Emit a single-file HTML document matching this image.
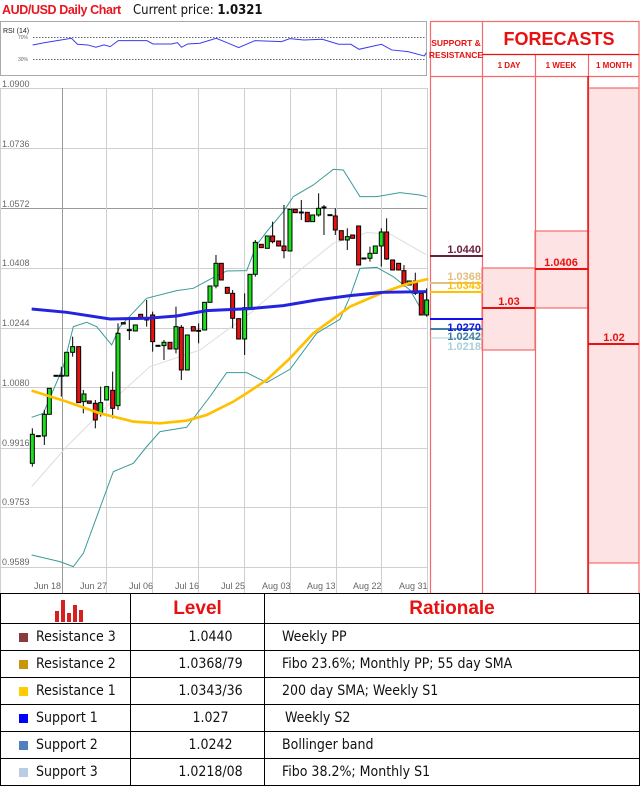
<!DOCTYPE html>
<html><head><meta charset="utf-8"><style>
body{margin:0;width:640px;height:791px;background:#fff;overflow:hidden;position:relative;font-family:"Liberation Sans",sans-serif}
.a{position:absolute}
.t{font-family:"DejaVu Sans Condensed","Liberation Sans",sans-serif}
table{border-collapse:collapse;position:absolute;left:0;top:593px;width:640px;table-layout:fixed}
td{border:1.5px solid #000;height:26px;padding:0;font-size:14px;color:#111;font-family:"DejaVu Sans Condensed","Liberation Sans",sans-serif;white-space:nowrap;overflow:hidden}
.sq{display:inline-block;width:9px;height:9px;margin:0 8px 0 18px;vertical-align:-1px}
</style></head><body>
<div class="a" style="left:2px;top:3px;font-size:12.5px;font-weight:bold;color:#e8141e;letter-spacing:-0.4px;font-family:'Liberation Sans',sans-serif">AUD/USD Daily Chart</div>
<div class="a t" style="left:133px;top:3px;font-size:13px;color:#111">Current price: <b>1.0321</b></div>

<svg class="a" style="left:0;top:0" width="640" height="593">
<rect x="0.5" y="21.5" width="426" height="54" fill="#fff" stroke="#aaa"/>
<text x="3" y="33" font-size="7" font-family="Liberation Sans" fill="#222">RSI (14)</text>
<text x="18" y="39" font-size="5" fill="#666">70%</text>
<text x="18" y="61" font-size="5" fill="#666">30%</text>
<line x1="33" y1="37.5" x2="426" y2="37.5" stroke="#666" stroke-dasharray="1.5,1.5"/>
<line x1="33" y1="59.5" x2="426" y2="59.5" stroke="#666" stroke-dasharray="1.5,1.5"/>
<g transform="scale(0.408,0.333)"><polyline fill="none" stroke="#3b3bf0" stroke-width="1" vector-effect="non-scaling-stroke" points="80,135 110,128 140,122 175,115 190,133 215,135 235,142 255,135 270,140 290,122 320,122 360,122 375,132 420,132 435,128 445,142 460,132 490,130 530,115 560,130 585,143 625,122 690,125 710,116 745,120 790,118 830,133 860,133 880,148 935,133 960,150 1000,155 1040,168 1045,158"/></g>

<g stroke="#cfcfcf" stroke-width="1">
<line x1="0" y1="88.5" x2="427" y2="88.5"/><line x1="0" y1="148.5" x2="427" y2="148.5"/><line x1="0" y1="208.5" x2="427" y2="208.5" stroke="#999"/><line x1="0" y1="268.5" x2="427" y2="268.5"/><line x1="0" y1="328.5" x2="427" y2="328.5"/><line x1="0" y1="387.5" x2="427" y2="387.5"/><line x1="0" y1="448.5" x2="427" y2="448.5"/><line x1="0" y1="507.5" x2="427" y2="507.5"/><line x1="0" y1="567.5" x2="427" y2="567.5"/>
<line x1="62.5" y1="88" x2="62.5" y2="593" stroke="#999"/><line x1="106.5" y1="88" x2="106.5" y2="593"/><line x1="152.5" y1="88" x2="152.5" y2="593"/><line x1="198.5" y1="88" x2="198.5" y2="593"/><line x1="244.5" y1="88" x2="244.5" y2="593"/><line x1="290.5" y1="88" x2="290.5" y2="593"/><line x1="336.5" y1="88" x2="336.5" y2="593"/><line x1="381.5" y1="88" x2="381.5" y2="593"/><line x1="427.5" y1="88" x2="427.5" y2="593"/><line x1="0.5" y1="88" x2="0.5" y2="593"/>
</g>
<g font-size="9" fill="#666" font-family="Liberation Sans">
<text x="2" y="87">1.0900</text><text x="2" y="147">1.0736</text><text x="2" y="207">1.0572</text><text x="2" y="266">1.0408</text><text x="2" y="326">1.0244</text><text x="2" y="386">1.0080</text><text x="2" y="446">0.9916</text><text x="2" y="505">0.9753</text><text x="2" y="565">0.9589</text>
<text x="34" y="589">Jun 18</text><text x="80" y="589">Jun 27</text><text x="129" y="589">Jul 06</text><text x="175" y="589">Jul 16</text><text x="221" y="589">Jul 25</text><text x="262" y="589">Aug 03</text><text x="307" y="589">Aug 13</text><text x="353" y="589">Aug 22</text><text x="399" y="589">Aug 31</text>
</g>

<g transform="translate(0,80) scale(0.3333)">
<polyline fill="none" stroke="#ddd" stroke-width="3" points="95,1220 200,1100 350,950 450,860 600,810 750,700 900,570 1000,490 1100,458 1170,462 1280,525"/>
<polyline fill="none" stroke="#3a9a9a" stroke-width="3" points="95,1012 130,1000 190,860 220,740 260,727 290,740 335,795 360,740 440,655 530,632 580,625 630,598 680,573 740,572 770,495 800,455 850,395 880,350 940,315 1000,268 1030,270 1080,350 1130,350 1200,338 1260,345 1280,350"/>
<polyline fill="none" stroke="#3a9a9a" stroke-width="3" points="95,1425 180,1445 220,1460 250,1420 340,1175 400,1150 440,1100 480,1055 560,1042 630,950 680,878 740,878 800,908 870,868 950,760 1020,718 1050,650 1080,565 1130,562 1180,590 1230,630 1265,690 1280,705"/>
<g stroke="#000" stroke-width="3">
<line x1="97" y1="1045" x2="97" y2="1160"/><line x1="133" y1="990" x2="133" y2="1095"/><line x1="184" y1="860" x2="184" y2="950"/><line x1="218" y1="770" x2="218" y2="830"/><line x1="250" y1="930" x2="250" y2="1000"/><line x1="286" y1="960" x2="286" y2="1045"/><line x1="302" y1="920" x2="302" y2="1010"/><line x1="338" y1="875" x2="338" y2="1015"/><line x1="354" y1="730" x2="354" y2="990"/><line x1="388" y1="720" x2="388" y2="780"/><line x1="440" y1="660" x2="440" y2="740"/><line x1="458" y1="695" x2="458" y2="815"/><line x1="492" y1="780" x2="492" y2="840"/><line x1="528" y1="680" x2="528" y2="820"/><line x1="544" y1="735" x2="544" y2="900"/><line x1="596" y1="730" x2="596" y2="790"/><line x1="648" y1="525" x2="648" y2="625"/><line x1="698" y1="630" x2="698" y2="745"/><line x1="734" y1="640" x2="734" y2="825"/><line x1="766" y1="480" x2="766" y2="590"/><line x1="818" y1="425" x2="818" y2="490"/><line x1="852" y1="375" x2="852" y2="535"/><line x1="904" y1="360" x2="904" y2="420"/><line x1="956" y1="340" x2="956" y2="410"/><line x1="972" y1="375" x2="972" y2="465"/><line x1="1006" y1="385" x2="1006" y2="465"/><line x1="1042" y1="445" x2="1042" y2="510"/><line x1="1110" y1="500" x2="1110" y2="545"/><line x1="1144" y1="445" x2="1144" y2="560"/><line x1="1160" y1="415" x2="1160" y2="540"/><line x1="1212" y1="555" x2="1212" y2="620"/><line x1="1246" y1="578" x2="1246" y2="645"/><line x1="1280" y1="625" x2="1280" y2="710"/>
</g>
<g stroke="#000" stroke-width="3">
<rect x="91" y="1063" width="12" height="87" fill="#1ee01e"/><rect x="109" y="1067" width="12" height="3" fill="#1ee01e"/><rect x="127" y="1003" width="12" height="65" fill="#1ee01e"/><rect x="142" y="925" width="12" height="78" fill="#1ee01e"/><rect x="162" y="886" width="12" height="3" fill="#1ee01e"/><rect x="178" y="886" width="12" height="3" fill="#1ee01e"/><rect x="194" y="817" width="12" height="71" fill="#1ee01e"/><rect x="212" y="800" width="12" height="17" fill="#1ee01e"/><rect x="230" y="800" width="12" height="168" fill="#e81010"/><rect x="246" y="942" width="12" height="23" fill="#1ee01e"/><rect x="262" y="963" width="12" height="7" fill="#e81010"/><rect x="280" y="970" width="12" height="50" fill="#e81010"/><rect x="296" y="968" width="12" height="32" fill="#1ee01e"/><rect x="314" y="920" width="12" height="40" fill="#1ee01e"/><rect x="332" y="931" width="12" height="54" fill="#e81010"/><rect x="348" y="760" width="12" height="217" fill="#1ee01e"/><rect x="364" y="728" width="12" height="4" fill="#e81010"/><rect x="382" y="749" width="12" height="3" fill="#1ee01e"/><rect x="400" y="735" width="12" height="18" fill="#1ee01e"/><rect x="416" y="703" width="12" height="12" fill="#e81010"/><rect x="434" y="717" width="12" height="3" fill="#1ee01e"/><rect x="452" y="705" width="12" height="80" fill="#e81010"/><rect x="468" y="796" width="12" height="3" fill="#1ee01e"/><rect x="486" y="787" width="12" height="10" fill="#1ee01e"/><rect x="504" y="787" width="12" height="20" fill="#e81010"/><rect x="522" y="740" width="12" height="67" fill="#1ee01e"/><rect x="538" y="742" width="12" height="128" fill="#e81010"/><rect x="556" y="765" width="12" height="105" fill="#1ee01e"/><rect x="574" y="740" width="12" height="13" fill="#e81010"/><rect x="590" y="751" width="12" height="3" fill="#1ee01e"/><rect x="608" y="667" width="12" height="83" fill="#1ee01e"/><rect x="624" y="618" width="12" height="49" fill="#1ee01e"/><rect x="642" y="550" width="12" height="68" fill="#1ee01e"/><rect x="658" y="550" width="12" height="50" fill="#e81010"/><rect x="676" y="622" width="12" height="18" fill="#e81010"/><rect x="692" y="640" width="12" height="75" fill="#e81010"/><rect x="710" y="716" width="12" height="61" fill="#e81010"/><rect x="728" y="683" width="12" height="94" fill="#1ee01e"/><rect x="744" y="583" width="12" height="100" fill="#1ee01e"/><rect x="760" y="487" width="12" height="96" fill="#1ee01e"/><rect x="778" y="493" width="12" height="10" fill="#e81010"/><rect x="796" y="468" width="12" height="37" fill="#1ee01e"/><rect x="812" y="468" width="12" height="17" fill="#e81010"/><rect x="830" y="483" width="12" height="15" fill="#e81010"/><rect x="846" y="498" width="12" height="14" fill="#e81010"/><rect x="864" y="388" width="12" height="125" fill="#1ee01e"/><rect x="880" y="388" width="12" height="10" fill="#e81010"/><rect x="898" y="396" width="12" height="3" fill="#1ee01e"/><rect x="916" y="397" width="12" height="28" fill="#e81010"/><rect x="932" y="405" width="12" height="20" fill="#1ee01e"/><rect x="950" y="385" width="12" height="20" fill="#1ee01e"/><rect x="966" y="381" width="12" height="3" fill="#1ee01e"/><rect x="984" y="404" width="12" height="3" fill="#1ee01e"/><rect x="1000" y="408" width="12" height="42" fill="#e81010"/><rect x="1018" y="452" width="12" height="28" fill="#e81010"/><rect x="1036" y="470" width="12" height="10" fill="#1ee01e"/><rect x="1052" y="465" width="12" height="10" fill="#e81010"/><rect x="1070" y="438" width="12" height="117" fill="#e81010"/><rect x="1086" y="534" width="12" height="3" fill="#1ee01e"/><rect x="1104" y="520" width="12" height="15" fill="#1ee01e"/><rect x="1120" y="498" width="12" height="22" fill="#1ee01e"/><rect x="1138" y="456" width="12" height="42" fill="#1ee01e"/><rect x="1154" y="456" width="12" height="81" fill="#e81010"/><rect x="1172" y="540" width="12" height="30" fill="#e81010"/><rect x="1190" y="550" width="12" height="20" fill="#e81010"/><rect x="1206" y="572" width="12" height="40" fill="#e81010"/><rect x="1222" y="603" width="12" height="12" fill="#1ee01e"/><rect x="1240" y="603" width="12" height="37" fill="#e81010"/><rect x="1258" y="640" width="12" height="65" fill="#e81010"/><rect x="1274" y="660" width="12" height="45" fill="#1ee01e"/>
</g>
<polyline fill="none" stroke="#ffc000" stroke-width="8" points="95,932 200,965 300,1000 400,1025 480,1030 560,1022 620,1005 700,965 740,940 800,900 870,835 940,760 1050,680 1150,637 1220,612 1285,597"/>
<polyline fill="none" stroke="#2323e0" stroke-width="9" points="95,687 200,697 330,717 440,715 530,708 620,692 750,686 850,677 950,660 1050,647 1150,637 1280,635"/>
</g>

<rect x="588" y="88" width="51" height="475" fill="#fde3e3" stroke="#f05050"/>
<rect x="482" y="268" width="53" height="82" fill="#fde3e3" stroke="#f05050"/>
<rect x="535" y="231" width="53" height="77" fill="#fde3e3" stroke="#f05050"/>
<g stroke="#f26a6a" stroke-width="1.2" fill="none">
<rect x="430.5" y="21.5" width="208.5" height="572"/>
<line x1="482.5" y1="21" x2="482.5" y2="593"/><line x1="535.5" y1="54" x2="535.5" y2="593"/><line x1="588.5" y1="54" x2="588.5" y2="593"/>
<line x1="482" y1="54.5" x2="639" y2="54.5" stroke="#e81010"/><line x1="430" y1="76.5" x2="639" y2="76.5"/>
</g>
<line x1="588" y1="76" x2="588" y2="593" stroke="#e81010" stroke-width="1.5"/>
<line x1="482" y1="308" x2="535" y2="308" stroke="#e81010" stroke-width="2"/>
<line x1="535" y1="269" x2="588" y2="269" stroke="#e81010" stroke-width="2"/>
<line x1="588" y1="344" x2="639" y2="344" stroke="#e81010" stroke-width="2"/>
<g font-family="Liberation Sans" font-weight="bold" fill="#e81010" text-anchor="middle">
<text x="456" y="46" font-size="8.5">SUPPORT &amp;</text><text x="456" y="58" font-size="8.5">RESISTANCE</text>
<text x="559" y="45" font-size="18">FORECASTS</text>
<text x="509" y="68" font-size="8">1 DAY</text><text x="561" y="68" font-size="8">1 WEEK</text><text x="614" y="68" font-size="8">1 MONTH</text>
<text x="509" y="305" font-size="11">1.03</text><text x="561" y="266" font-size="11">1.0406</text><text x="614" y="341" font-size="11">1.02</text>
</g>
<line x1="430" y1="256" x2="483" y2="256" stroke="#6b2040" stroke-width="2"/>
<line x1="430" y1="283" x2="483" y2="283" stroke="#e0c080" stroke-width="2"/>
<line x1="430" y1="292" x2="483" y2="292" stroke="#ffc000" stroke-width="2"/>
<line x1="430" y1="319" x2="483" y2="319" stroke="#1010f0" stroke-width="2"/>
<line x1="430" y1="329" x2="483" y2="329" stroke="#3f7f9f" stroke-width="2"/>
<line x1="430" y1="338" x2="483" y2="338" stroke="#a8d0d8" stroke-width="1"/>
<g font-family="Liberation Sans" font-weight="bold" font-size="11" text-anchor="end">
<text x="481" y="253" fill="#6b2040">1.0440</text>
<text x="481" y="280" fill="#e0c080">1.0368</text>
<text x="481" y="289" fill="#ffc000">1.0343</text>
<text x="481" y="331" fill="#1010f0">1.0270</text>
<text x="481" y="340" fill="#3f7f9f">1.0242</text>
<text x="481" y="350" fill="#a8d0d8">1.0218</text>
</g>
</svg>

<table>
<colgroup><col style="width:130px"><col style="width:134px"><col></colgroup>
<tr><td style="height:29px;position:relative"><svg width="30" height="26" style="position:absolute;left:52px;top:3px"><g fill="#d42020"><rect x="2" y="14" width="4" height="11"/><rect x="8" y="3" width="4" height="22"/><rect x="14" y="16" width="4" height="9"/><rect x="20" y="8" width="4" height="17"/><rect x="26" y="13" width="4" height="12"/></g></svg></td>
<td style="text-align:center;font-family:'Liberation Sans',sans-serif;font-weight:bold;font-size:19px;color:#e81010">Level</td>
<td style="text-align:center;font-family:'Liberation Sans',sans-serif;font-weight:bold;font-size:19px;color:#e81010">Rationale</td></tr>
<tr><td><span class="sq" style="background:#8b3a3a"></span>Resistance 3</td><td style="text-align:center;padding-left:26px">1.0440</td><td style="padding-left:17px">Weekly PP</td></tr>
<tr><td><span class="sq" style="background:#c8960a"></span>Resistance 2</td><td style="text-align:center;padding-left:26px">1.0368/79</td><td style="padding-left:17px">Fibo 23.6%; Monthly PP; 55 day SMA</td></tr>
<tr><td><span class="sq" style="background:#ffcc00"></span>Resistance 1</td><td style="text-align:center;padding-left:26px">1.0343/36</td><td style="padding-left:17px">200 day SMA; Weekly S1</td></tr>
<tr><td><span class="sq" style="background:#0000ff"></span>Support 1</td><td style="text-align:center;padding-left:26px">1.027</td><td style="padding-left:20px">Weekly S2</td></tr>
<tr><td><span class="sq" style="background:#4f81bd"></span>Support 2</td><td style="text-align:center;padding-left:26px">1.0242</td><td style="padding-left:17px">Bollinger band</td></tr>
<tr><td><span class="sq" style="background:#b8cce4"></span>Support 3</td><td style="text-align:center;padding-left:26px">1.0218/08</td><td style="padding-left:17px">Fibo 38.2%; Monthly S1</td></tr>
</table>
</body></html>
